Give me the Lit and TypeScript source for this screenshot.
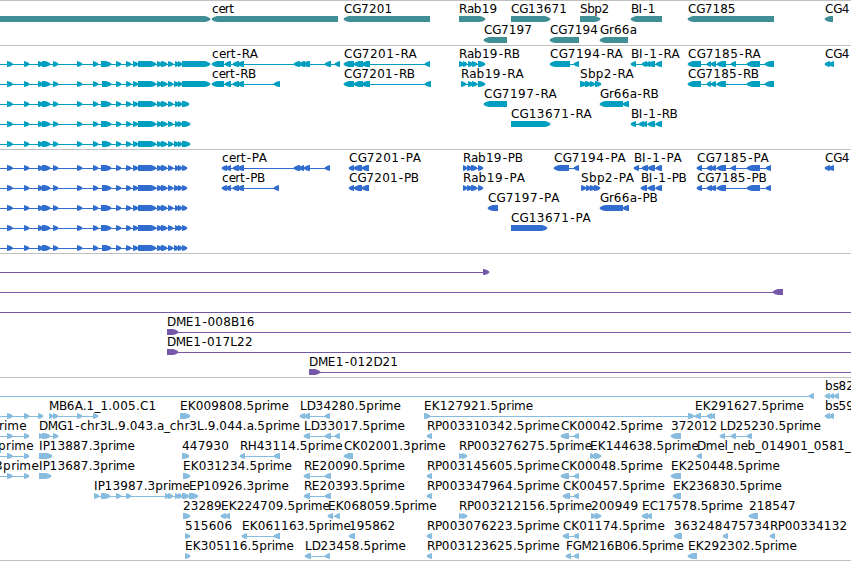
import { LitElement, html, svg, css } from 'lit';
import { customElement, property } from 'lit/decorators.js';

type Strand = 'fwd' | 'rev';

interface Feature {
    row: number;
    strand: Strand;
    blocks: number[][];
    label?: string;
    labelEnd?: number;
    line?: [number, number];
}

interface Track {
    name: string;
    height: number;
    top: number;
    pitch: number;
    features: Feature[];
}

const VIEW_WIDTH = 851;
const BLOCK_HEIGHT = 6;

// advances of the label font in whole pixels, digits and most letters are 8
const ADVANCES: Record<string, number> = {
    C: 8.5, G: 9, D: 9, H: 9, M: 10, L: 7, P: 7, F: 7, I: 4,
    a: 7, c: 7, e: 7, r: 5, t: 5, i: 3, l: 3, m: 12, s: 6,
    '-': 6, _: 6, '.': 4,
};

const glyphPositions = (text: string, from: number, to: number) => {
    const chars = [...text];
    const widths = chars.map((c) => ADVANCES[c] ?? 8);
    const total = widths.reduce((a, b) => a + b, 0);
    const extra = (to - from - total) / text.length;
    let x = from;
    return widths
        .map((w, i) => {
            // the hyphen sits centred in its wide cell
            const at = chars[i] === '-' ? x + 0.9 : x;
            x += w + extra;
            return at.toFixed(2);
        })
        .join(' ');
};

// blocks are written as "start-end start-end ..."
const parse = (blocks: string) =>
    blocks
        .split(' ')
        .filter(Boolean)
        .map((b) => b.split('-').map(Number));

const f = (
    row: number,
    strand: Strand,
    blocks: string,
    label?: string,
    labelEnd?: number,
    line?: [number, number]
): Feature => ({ row, strand, blocks: parse(blocks), label, labelEnd, line });

const EXONS = '7-12.5 24-29 38-43 42-50 53-58 77-82 93-98';
const EXONS_MID = '116-121 126-131 133-138 138-156 157-162 161-167 168-173';

const leftGene = (row: number, alt: boolean, end: number) =>
    f(
        row,
        'fwd',
        `${EXONS} ${alt ? 102 : 101}-111 ${EXONS_MID} ${alt ? 174 : 175}-179 178-182 182-${end}`,
        undefined,
        undefined,
        [0, end - 3]
    );

const TRACKS: Track[] = [
    {
        name: 'gene',
        height: 45,
        top: 16,
        pitch: 21,
        features: [
            { row: 0, strand: 'fwd', blocks: [[-10, 210]] },
            f(0, 'rev', '212-338', 'cert', 233.5),
            f(0, 'rev', '344-430', 'CG7201', 392.3),
            f(0, 'fwd', '459-485', 'Rab19', 497.5),
            f(0, 'fwd', '511-550', 'CG13671', 567),
            f(0, 'fwd', '580-600', 'Sbp2', 608.7),
            f(0, 'rev', '631-662', 'BI-1', 655.3),
            f(0, 'rev', '688-774', 'CG7185', 735.5),
            f(0, 'rev', '825-833', 'CG4', 849.5),
            f(1, 'rev', '484-507', 'CG7197', 532),
            f(1, 'rev', '550-579', 'CG7194', 598),
            f(1, 'rev', '600-628', 'Gr66a', 636.7),
        ],
    },
    {
        name: 'transcript',
        height: 104,
        top: 16,
        pitch: 20,
        features: [
            leftGene(0, false, 210),
            leftGene(1, true, 210),
            leftGene(2, false, 189),
            leftGene(3, false, 190),
            leftGene(4, true, 190),
            f(0, 'rev', '212-224 225-231 233-239 238-244 294-300 299-305 303-310 325-331 335-340', 'cert-RA', 257.7),
            f(1, 'rev', '212-224 225-231 233-239 238-244 274-280', 'cert-RB', 255.7),
            f(0, 'rev', '344-354 354-363 362-370 425-430', 'CG7201-RA', 416.7),
            f(1, 'rev', '344-354 354-363 362-370 425-431', 'CG7201-RB', 414.7),
            f(0, 'fwd', '459-464 463-467 468-473 472-477 478-485', 'Rab19-RB', 519.7),
            f(1, 'fwd', '461-466 468-473 472-477 478-485', 'Rab19-RA', 523.7),
            f(0, 'rev', '550-570 574-579', 'CG7194-RA', 622.7),
            f(1, 'fwd', '580-586 585-591 590-595 595-601', 'Sbp2-RA', 633.3),
            f(2, 'rev', '484-507', 'CG7197-RA', 556.7),
            f(2, 'rev', '600-623 623-629', 'Gr66a-RB', 658.3),
            f(3, 'fwd', '511-550', 'CG13671-RA', 591.7),
            f(0, 'rev', '631-636 642-647 646-650 648-655 656-662', 'BI-1-RA', 679.7),
            f(3, 'rev', '631-636 639-644 642-647 648-655 656-662', 'BI-1-RB', 677.3),
            f(0, 'rev', '688-701 707-711 711-716 717-726 731-736 747-760 765-774', 'CG7185-RA', 760.7),
            f(1, 'rev', '688-701 707-711 711-716 717-726 747-760 765-774', 'CG7185-RB', 758.7),
            f(0, 'rev', '825-830 829-834', 'CG4', 849.5),
        ],
    },
    {
        name: 'protein',
        height: 104,
        top: 16,
        pitch: 20,
        features: [
            leftGene(0, false, 187),
            leftGene(1, true, 187),
            leftGene(2, false, 187),
            leftGene(3, false, 187),
            leftGene(4, true, 187),
            f(0, 'rev', '222-227 226-231 233-239 238-244 294-300 299-304 304-310 325-330', 'cert-PA', 266.7),
            f(1, 'rev', '222-227 226-231 233-239 238-244 274-279', 'cert-PB', 264.7),
            f(0, 'rev', '349-354 354-362 362-369', 'CG7201-PA', 421),
            f(1, 'rev', '349-354 354-362 362-369', 'CG7201-PB', 418.7),
            f(0, 'fwd', '463-467 467-472 471-477 478-483', 'Rab19-PB', 522.7),
            f(1, 'fwd', '463-467 467-472 471-477 478-483', 'Rab19-PA', 525),
            f(0, 'rev', '554-569 574-579', 'CG7194-PA', 625.7),
            f(0, 'rev', '634-639 642-648 648-655 656-662', 'BI-1-PA', 681.7),
            f(1, 'rev', '641-647 648-655 656-662', 'BI-1-PB', 686.3),
            f(0, 'rev', '697-702 707-712 711-716 717-726 731-736 747-760 766-771', 'CG7185-PA', 768.7),
            f(1, 'rev', '697-702 707-712 711-716 717-726 747-760 766-771', 'CG7185-PB', 766.3),
            f(0, 'rev', '825-830 829-834', 'CG4', 849.5),
            f(1, 'fwd', '581-586 586-591 590-595 594-600', 'Sbp2-PA', 633.7),
            f(2, 'rev', '488-498', 'CG7197-PA', 559.3),
            f(2, 'rev', '600-623 623-629', 'Gr66a-PB', 657.3),
            f(3, 'fwd', '511-547', 'CG13671-PA', 590.7),
        ],
    },
    {
        name: 'clone',
        height: 124,
        top: 16,
        pitch: 20,
        features: [
            f(0, 'fwd', '483-489', undefined, undefined, [0, 484]),
            f(1, 'rev', '773-783', undefined, undefined, [0, 778]),
            f(2, 'fwd', '', undefined, undefined, [0, VIEW_WIDTH]),
            f(3, 'fwd', '167-178', 'DME1-008B16', 254.7, [170, VIEW_WIDTH]),
            f(4, 'fwd', '167-178', 'DME1-017L22', 252.7, [170, VIEW_WIDTH]),
            f(5, 'fwd', '309-320', 'DME1-012D21', 398.3, [312, VIEW_WIDTH]),
        ],
    },
    {
        name: 'est',
        height: 183,
        top: 16,
        pitch: 20,
        features: [
            f(0, 'rev', '809-814', undefined, undefined, [0, 812]),
            f(0, 'rev', '825-830 830-834 834-839', 'bs82', 854),

            f(1, 'fwd', '7-12.5 24-29 38-43', undefined, undefined, [0, 40]),
            f(1, 'fwd', '49-53 53-58 77-82 93-98', 'MB6A.1_1.005.C1', 156.3),
            f(1, 'fwd', '180-190', 'EK009808.5prime', 288.3),
            f(1, 'rev', '300-305 304-310 325-330', 'LD34280.5prime', 400.3),
            f(1, 'fwd', '424-430 688-694', 'EK127921.5prime', 532.7),
            f(1, 'rev', '695-701 707-712 711-715', 'EK291627.5prime', 803.3, [694, 712]),
            f(1, 'rev', '825-830 829-834', 'bs59', 854),

            f(2, 'fwd', '7-12.5 24-29', undefined, undefined, [0, 26]),
            { row: 2, strand: 'fwd', blocks: [[-9, -5]], label: 'prime', labelEnd: 26.3 },
            f(2, 'fwd', '39-43 42-50 53-58', 'DMG1-chr3L.9.043.a_chr3L.9.044.a.5prime', 299.3),
            f(2, 'rev', '304-310 325-331 335-340', 'LD33017.5prime', 404.3),
            f(2, 'rev', '427-432', 'RP003310342.5prime', 559.2),
            f(2, 'rev', '561-569 574-579', 'CK00042.5prime', 662.3),
            f(2, 'rev', '671-681', '372012', 717.3),
            f(2, 'rev', '720-725 731-736 747-752', 'LD25230.5prime', 820.3),

            f(3, 'fwd', '7-12.5 24-29', undefined, undefined, [0, 26]),
            { row: 3, strand: 'fwd', blocks: [[-6, -4]], label: '.prime', labelEnd: 33.3 },
            f(3, 'fwd', '39-52', 'IP13887.3prime', 134.3),
            f(3, 'fwd', '182-189', '447930', 229),
            f(3, 'rev', '240-245 274-280', 'RH43114.5prime', 342),
            f(3, 'rev', '344-353', 'CK02001.3prime', 445),
            f(3, 'fwd', '459-463 462-467', 'RP003276275.5prime', 591.7),
            f(3, 'fwd', '590-595 594-601', 'EK144638.5prime', 698.3),
            f(3, 'rev', '697-702', 'Dmel_neb_014901_0581_', 850.7),

            f(4, 'fwd', '7-12.5 24-29', undefined, undefined, [0, 26]),
            { row: 4, strand: 'fwd', blocks: [[-5, -2]], label: '3prime', labelEnd: 38.5 },
            f(4, 'fwd', '39-51', 'IP13687.3prime', 134.3),
            f(4, 'fwd', '183-190', 'EK031234.5prime', 291.3),
            f(4, 'rev', '304-310 325-331', 'RE20090.5prime', 404.3),
            f(4, 'rev', '427-432', 'RP003145605.5prime', 559.2),
            f(4, 'rev', '561-569 574-579', 'CK00048.5prime', 662.3),
            f(4, 'rev', '671-681', 'EK250448.5prime', 779.3),

            f(5, 'fwd', '94-99 101-110 116-121 126-131 165-169 168-173 175-179 178-182 182-189', 'IP13987.3prime', 189.3),
            f(5, 'fwd', '189-198', 'EP10926.3prime', 288.3),
            f(5, 'rev', '304-310 325-331', 'RE20393.5prime', 404.3),
            f(5, 'rev', '427-432', 'RP003347964.5prime', 559.2),
            f(5, 'rev', '563-570 574-579', 'CK00457.5prime', 664.3),
            f(5, 'rev', '673-681', 'EK236830.5prime', 781.3),

            f(6, 'fwd', '183-190', '23289', 221.7),
            f(6, 'rev', '221-226 225-230', 'EK224709.5prime', 329.3),
            f(6, 'rev', '328-333 335-340', 'EK068059.5prime', 436),
            f(6, 'fwd', '459-463 462-467', 'RP003212156.5prime', 591.7),
            f(6, 'fwd', '591-596 595-601', '200949', 638.3),
            f(6, 'rev', '642-648 647-652', 'EC17578.5prime', 742.3),
            f(6, 'rev', '749-758', '218547', 795.7),

            f(7, 'fwd', '185-190', '515606', 232.3),
            f(7, 'rev', '242-247 274-280', 'EK061163.5prime', 350.3),
            f(7, 'rev', '349-355', '195862', 395.3),
            f(7, 'rev', '427-432', 'RP003076223.5prime', 559.2),
            f(7, 'rev', '563-569 574-579', 'CK01174.5prime', 664.3),
            f(7, 'rev', '674-682', '363248', 723),
            f(7, 'rev', '723-728', '475734', 769.7),
            f(7, 'rev', '770-775', 'RP00334132', 847.3),

            f(8, 'fwd', '185-190', 'EK305116.5prime', 293.3),
            f(8, 'rev', '305-311 325-330', 'LD23458.5prime', 405.3),
            f(8, 'rev', '427-432', 'RP003123625.5prime', 559.2),
            f(8, 'rev', '566-571 574-579', 'FGM216B06.5prime', 683.3),
            f(8, 'rev', '688-697', 'EK292302.5prime', 796.3),
        ],
    },
];

@customElement('feature-track')
export class FeatureTrack extends LitElement {
    @property({ attribute: false }) track!: Track;

    static styles = css`
        :host {
            display: block;
            border-top: 1px solid #c0c0c0;
            box-sizing: border-box;
            overflow: hidden;
        }
        svg {
            display: block;
        }
        text {
            font-family: 'DejaVu Sans', sans-serif;
            font-size: 12px;
            fill: #000;
        }
        .gene {
            fill: #408f96;
        }
        .transcript {
            fill: #009fbf;
        }
        .protein {
            fill: #306dce;
        }
        .clone {
            fill: #7559a8;
        }
        .est {
            fill: #87bcde;
        }
    `;

    private block([start, end]: number[], y: number, strand: Strand) {
        const head = Math.min(5, end - start);
        const [tail, tip, dir] = strand === 'fwd' ? [start, end, 1] : [end, start, -1];
        const neck = tip - dir * head;
        const cheek = tip - dir * head * 0.4;
        const bottom = y + BLOCK_HEIGHT;
        const points = [
            [tail, y],
            [neck, y],
            [cheek, y + 1.1],
            [tip, y + 2.2],
            [tip + dir * 0.5, y + 3],
            [tip, y + 4],
            [cheek, bottom - 0.8],
            [neck, bottom],
            [tail, bottom],
        ];
        return svg`<polygon points=${points.map((p) => p.join(',')).join(' ')}></polygon>`;
    }

    private feature(feature: Feature) {
        const { row, strand, blocks, label, labelEnd } = feature;
        // the border takes the first pixel of the track
        const y = this.track.top + row * this.track.pitch - 1;
        const [from, to] = feature.line ?? [blocks[0][0] + 3, blocks[blocks.length - 1][1] - 3];
        const labelX = blocks.length ? blocks[0][0] : 0;
        return svg`
            <rect x=${from} y=${y + 3} width=${Math.max(to - from, 0)} height="1"></rect>
            ${blocks.map((b) => this.block(b, y, strand))}
            ${label
                ? svg`<text x=${glyphPositions(label, labelX, labelEnd!)} y=${y - 3}>${label}</text>`
                : null}
        `;
    }

    render() {
        const { name, height, features } = this.track;
        return html`
            <svg class=${name} width=${VIEW_WIDTH} height=${height - 1}>
                ${features.map((item) => this.feature(item))}
            </svg>
        `;
    }
}

@customElement('app-root')
export class AppRoot extends LitElement {
    static styles = css`
        :host {
            display: block;
            width: 851px;
            height: 561px;
            box-sizing: border-box;
            background: #fff;
            border-bottom: 1px solid #c0c0c0;
            overflow: hidden;
        }
    `;

    render() {
        return html`${TRACKS.map((track) => html`<feature-track .track=${track}></feature-track>`)}`;
    }
}
